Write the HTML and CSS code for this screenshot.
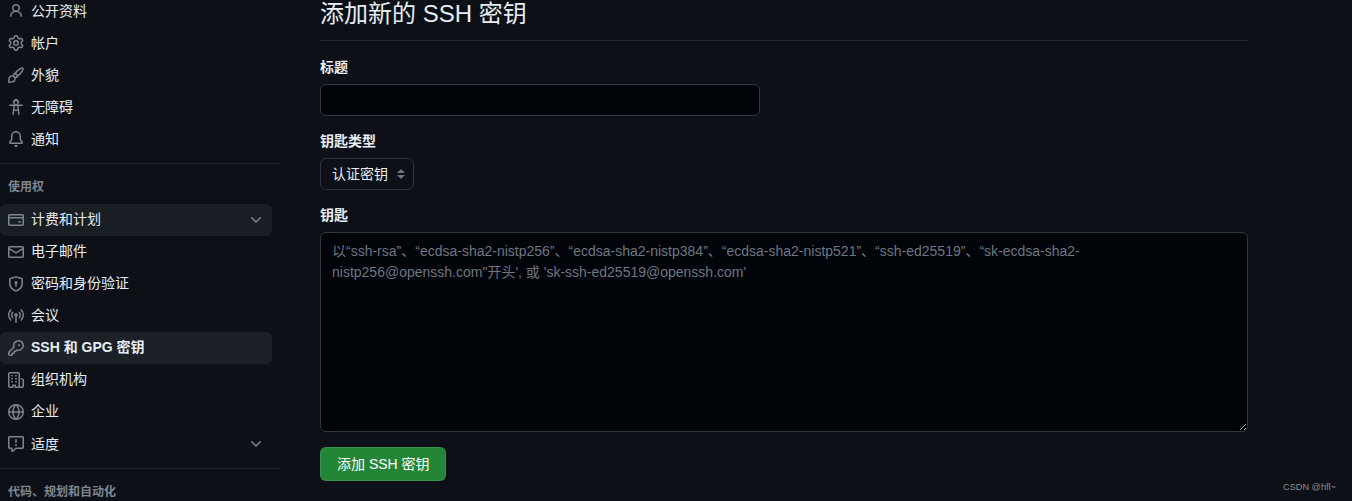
FILE: index.html
```html
<!DOCTYPE html>
<html lang="zh-CN">
<head>
<meta charset="utf-8">
<title>添加新的 SSH 密钥</title>
<link rel="stylesheet" href="styles.css">
</head>
<body>
<div class="page">
  <nav class="sidebar">
    <a class="item"><svg class="icon" viewBox="0 0 16 16"><path d="M10.561 8.073a6.005 6.005 0 0 1 3.432 5.142.75.75 0 1 1-1.498.07 4.5 4.5 0 0 0-8.99 0 .75.75 0 1 1-1.498-.07 6.004 6.004 0 0 1 3.431-5.142 3.999 3.999 0 1 1 5.123 0ZM10.5 5a2.5 2.5 0 1 0-5 0 2.5 2.5 0 0 0 5 0Z"/></svg><span>公开资料</span></a>
    <a class="item"><svg class="icon" viewBox="0 0 16 16"><path d="M8 0a8.2 8.2 0 0 1 .701.031C9.444.095 9.99.645 10.16 1.29l.288 1.107c.018.066.079.158.212.224.231.114.454.243.668.386.123.082.233.09.299.071l1.103-.303c.644-.176 1.392.021 1.82.63.27.385.506.792.704 1.218.315.675.111 1.422-.364 1.891l-.814.806c-.049.048-.098.147-.088.294.016.257.016.515 0 .772-.01.147.038.246.088.294l.814.806c.475.469.679 1.216.364 1.891a7.977 7.977 0 0 1-.704 1.217c-.428.61-1.176.807-1.82.63l-1.102-.302c-.067-.019-.177-.011-.3.071a5.909 5.909 0 0 1-.668.386c-.133.066-.194.158-.211.224l-.29 1.106c-.168.646-.715 1.196-1.458 1.26a8.006 8.006 0 0 1-1.402 0c-.743-.064-1.289-.614-1.458-1.26l-.289-1.106c-.018-.066-.079-.158-.212-.224a5.738 5.738 0 0 1-.668-.386c-.123-.082-.233-.09-.299-.071l-1.103.303c-.644.176-1.392-.021-1.82-.63a8.12 8.12 0 0 1-.704-1.218c-.315-.675-.111-1.422.363-1.891l.815-.806c.05-.048.098-.147.088-.294a6.214 6.214 0 0 1 0-.772c.01-.147-.038-.246-.088-.294l-.815-.806C.635 6.045.431 5.298.746 4.623a7.92 7.92 0 0 1 .704-1.217c.428-.61 1.176-.807 1.82-.63l1.102.302c.067.019.177.011.3-.071.214-.143.437-.272.668-.386.133-.066.194-.158.211-.224l.29-1.106C6.009.645 6.556.095 7.299.03 7.53.01 7.764 0 8 0Zm-.571 1.525c-.036.003-.108.036-.137.146l-.289 1.105c-.147.561-.549.967-.998 1.189-.173.086-.34.183-.5.29-.417.278-.97.423-1.529.27l-1.103-.303c-.109-.03-.175.016-.195.045-.22.312-.412.644-.573.99-.014.031-.021.11.059.19l.815.806c.411.406.562.957.53 1.456a4.709 4.709 0 0 0 0 .582c.032.499-.119 1.05-.53 1.456l-.815.806c-.081.08-.073.159-.059.19.162.346.353.677.573.989.02.03.085.076.195.046l1.102-.303c.56-.153 1.113-.008 1.53.27.161.107.328.204.501.29.447.222.85.629.997 1.189l.289 1.105c.029.109.101.143.137.146a6.6 6.6 0 0 0 1.142 0c.036-.003.108-.036.137-.146l.289-1.105c.147-.561.549-.967.998-1.189.173-.086.34-.183.5-.29.417-.278.97-.423 1.529-.27l1.103.303c.109.029.175-.016.195-.045.22-.313.411-.644.573-.99.014-.031.021-.11-.059-.19l-.815-.806c-.411-.406-.562-.957-.53-1.456a4.709 4.709 0 0 0 0-.582c-.032-.499.119-1.05.53-1.456l.815-.806c.081-.08.073-.159.059-.19a6.464 6.464 0 0 0-.573-.989c-.02-.03-.085-.076-.195-.046l-1.102.303c-.56.153-1.113.008-1.53-.27a4.44 4.44 0 0 0-.501-.29c-.447-.222-.85-.629-.997-1.189l-.289-1.105c-.029-.11-.101-.143-.137-.146a6.6 6.6 0 0 0-1.142 0ZM11 8a3 3 0 1 1-6 0 3 3 0 0 1 6 0ZM9.5 8a1.5 1.5 0 1 0-3.001.001A1.5 1.5 0 0 0 9.5 8Z"/></svg><span>帐户</span></a>
    <a class="item"><svg class="icon" viewBox="0 0 16 16"><path d="M11.134 1.535c.7-.509 1.416-.942 2.076-1.155.649-.21 1.463-.267 2.069.34.603.601.568 1.411.368 2.07-.202.668-.624 1.39-1.125 2.096-1.011 1.424-2.496 2.987-3.775 4.249-1.098 1.084-2.132 1.839-3.04 2.3a3.744 3.744 0 0 1-1.055 3.217c-.431.431-1.065.691-1.657.861-.614.177-1.294.287-1.914.357A21.151 21.151 0 0 1 .797 16H.743l.007-.75H.749L.742 16a.75.75 0 0 1-.743-.742l.743-.008-.742.007v-.054a21.25 21.25 0 0 1 .13-2.284c.067-.647.187-1.287.358-1.914.17-.591.43-1.226.86-1.657a3.746 3.746 0 0 1 3.227-1.054c.466-.893 1.225-1.907 2.314-2.982 1.271-1.255 2.833-2.75 4.245-3.777ZM1.62 13.089c-.051.464-.086.929-.104 1.395.466-.018.932-.053 1.396-.104a10.511 10.511 0 0 0 1.668-.309c.526-.151.856-.325 1.011-.48a2.25 2.25 0 1 0-3.182-3.182c-.155.155-.329.485-.48 1.01a10.515 10.515 0 0 0-.309 1.67Zm10.396-10.34c-1.224.89-2.605 2.189-3.822 3.384l1.718 1.718c1.21-1.205 2.51-2.597 3.387-3.833.47-.662.78-1.227.912-1.662.134-.444.032-.551.009-.575h-.001V1.78c-.014-.014-.113-.113-.548.027-.432.14-.995.462-1.655.942Zm-4.832 7.266-.001.001a9.859 9.859 0 0 0 1.63-1.142L7.155 7.216a9.7 9.7 0 0 0-1.161 1.607c.482.302.889.71 1.19 1.192Z"/></svg><span>外貌</span></a>
    <a class="item"><svg class="icon" viewBox="0 0 16 16"><path d="M9.923 5.302c.063.063.122.129.178.198H14A.75.75 0 0 1 14 7h-3.3l.578 5.163.362 2.997a.75.75 0 0 1-1.49.18L9.868 12H6.132l-.282 3.34a.75.75 0 0 1-1.49-.18l.362-2.997L5.3 7H2a.75.75 0 0 1 0-1.5h3.9a2.54 2.54 0 0 1 .176-.198 3 3 0 1 1 3.847 0ZM9.2 7.073h-2.4l-.39 3.427h3.18ZM8 5a1.5 1.5 0 1 0 0-3 1.5 1.5 0 0 0 0 3Z"/></svg><span>无障碍</span></a>
    <a class="item"><svg class="icon" viewBox="0 0 16 16"><path d="M8 16c.9 0 1.7-.6 1.9-1.5.1-.3-.1-.5-.4-.5h-3c-.3 0-.5.2-.4.5.2.9 1 1.5 1.9 1.5ZM3 5a5 5 0 0 1 10 0v2.947c0 .05.015.098.042.139l1.703 2.555A1.519 1.519 0 0 1 13.482 13H2.518a1.516 1.516 0 0 1-1.263-2.36l1.703-2.554A.255.255 0 0 0 3 7.947Zm5-3.5A3.5 3.5 0 0 0 4.5 5v2.947c0 .346-.102.683-.294.97l-1.703 2.556a.017.017 0 0 0-.003.01l.001.006c0 .002.002.004.004.006l.006.004.007.001h10.964l.007-.001.006-.004.004-.006.001-.007a.017.017 0 0 0-.003-.01l-1.703-2.554a1.745 1.745 0 0 1-.294-.97V5A3.5 3.5 0 0 0 8 1.5Z"/></svg><span>通知</span></a>
    <hr class="rule">
    <h2 class="group">使用权</h2>
    <a class="item hover"><svg class="icon" viewBox="0 0 16 16"><path d="M10.75 9a.75.75 0 0 0 0 1.5h1.5a.75.75 0 0 0 0-1.5h-1.5Z"/><path d="M0 3.75C0 2.784.784 2 1.75 2h12.5c.966 0 1.75.784 1.75 1.75v8.5A1.75 1.75 0 0 1 14.25 14H1.75A1.75 1.75 0 0 1 0 12.25ZM14.5 6.5h-13v5.75c0 .138.112.25.25.25h12.5a.25.25 0 0 0 .25-.25Zm0-2.75a.25.25 0 0 0-.25-.25H1.75a.25.25 0 0 0-.25.25V5h13Z"/></svg><span>计费和计划</span><svg class="icon chevron" viewBox="0 0 16 16"><path d="M12.78 5.22a.749.749 0 0 1 0 1.06l-4.25 4.25a.749.749 0 0 1-1.06 0L3.22 6.28a.749.749 0 1 1 1.06-1.06L8 8.939l3.72-3.719a.749.749 0 0 1 1.06 0Z"/></svg></a>
    <a class="item"><svg class="icon" viewBox="0 0 16 16"><path d="M1.75 2h12.5c.966 0 1.75.784 1.75 1.75v8.5A1.75 1.75 0 0 1 14.25 14H1.75A1.75 1.75 0 0 1 0 12.25v-8.5C0 2.784.784 2 1.75 2ZM1.5 12.251c0 .138.112.25.25.25h12.5a.25.25 0 0 0 .25-.25V5.809L8.38 9.397a.75.75 0 0 1-.76 0L1.5 5.809v6.442Zm13-8.181v-.32a.25.25 0 0 0-.25-.25H1.75a.25.25 0 0 0-.25.25v.32L8 7.88Z"/></svg><span>电子邮件</span></a>
    <a class="item"><svg class="icon" viewBox="0 0 16 16"><path d="m8.533.133 5.25 1.68A1.75 1.75 0 0 1 15 3.48V7c0 1.566-.32 3.182-1.303 4.682-.983 1.498-2.585 2.813-5.032 3.855a1.697 1.697 0 0 1-1.33 0c-2.447-1.042-4.049-2.357-5.032-3.855C1.32 10.182 1 8.566 1 7V3.48a1.75 1.75 0 0 1 1.217-1.667l5.25-1.68a1.748 1.748 0 0 1 1.066 0Zm-.61 1.429.001.001-5.25 1.68a.251.251 0 0 0-.174.237V7c0 1.36.275 2.666 1.057 3.859.784 1.194 2.121 2.342 4.366 3.298a.196.196 0 0 0 .154 0c2.245-.957 3.582-2.103 4.366-3.297C13.225 9.666 13.5 8.358 13.5 7V3.48a.25.25 0 0 0-.174-.238l-5.25-1.68a.25.25 0 0 0-.153 0ZM9.5 6.5c0 .536-.286 1.032-.75 1.3v2.45a.75.75 0 0 1-1.5 0V7.8A1.5 1.5 0 1 1 9.5 6.5Z"/></svg><span>密码和身份验证</span></a>
    <a class="item"><svg class="icon" viewBox="0 0 16 16"><path d="M8.75 8.582v5.668a.75.75 0 0 1-1.5 0V8.582a1.75 1.75 0 1 1 1.5 0Zm3.983-7.125a.75.75 0 0 1 1.06.026A7.976 7.976 0 0 1 16 7c0 2.139-.84 4.083-2.207 5.517a.75.75 0 1 1-1.086-1.034A6.474 6.474 0 0 0 14.5 7a6.474 6.474 0 0 0-1.793-4.483.75.75 0 0 1 .026-1.06Zm-9.466 0a.75.75 0 0 1 .026 1.06A6.474 6.474 0 0 0 1.5 7a6.47 6.47 0 0 0 1.793 4.483.75.75 0 0 1-1.086 1.034A7.973 7.973 0 0 1 0 7c0-2.139.84-4.083 2.207-5.517a.75.75 0 0 1 1.06-.026Zm8.556 2.321A4.988 4.988 0 0 1 13 7a4.988 4.988 0 0 1-1.177 3.222.75.75 0 1 1-1.146-.967A3.487 3.487 0 0 0 11.5 7c0-.86-.309-1.645-.823-2.255a.75.75 0 0 1 1.146-.967Zm-6.492.958A3.48 3.48 0 0 0 4.5 7a3.48 3.48 0 0 0 .823 2.255.75.75 0 0 1-1.146.967A4.981 4.981 0 0 1 3 7a4.982 4.982 0 0 1 1.188-3.236.75.75 0 1 1 1.143.972Z"/></svg><span>会议</span></a>
    <a class="item active"><svg class="icon" viewBox="0 0 16 16"><path d="M10.5 0a5.499 5.499 0 1 1-1.288 10.848l-.932.932a.749.749 0 0 1-.53.22H7v.75a.749.749 0 0 1-.22.53l-.5.5a.749.749 0 0 1-.53.22H5v.75a.749.749 0 0 1-.22.53l-.5.5a.749.749 0 0 1-.53.22h-2A1.75 1.75 0 0 1 0 14.25v-2c0-.199.079-.389.22-.53l4.932-4.932A5.5 5.5 0 0 1 10.5 0Zm-4 5.5c-.001.431.069.86.205 1.269a.75.75 0 0 1-.181.768L1.5 12.56v1.69c0 .138.112.25.25.25h1.69l.06-.06v-1.19a.75.75 0 0 1 .75-.75h1.19l.06-.06v-1.19a.75.75 0 0 1 .75-.75h1.19l1.023-1.025a.75.75 0 0 1 .768-.18A4 4 0 1 0 6.5 5.5ZM11 6a1 1 0 1 1 0-2 1 1 0 0 1 0 2Z"/></svg><span>SSH 和 GPG 密钥</span></a>
    <a class="item"><svg class="icon" viewBox="0 0 16 16"><path d="M1.75 16A1.75 1.75 0 0 1 0 14.25V1.75C0 .784.784 0 1.75 0h8.5C11.216 0 12 .784 12 1.75v12.5c0 .085-.006.168-.018.25h2.268a.25.25 0 0 0 .25-.25V8.285a.25.25 0 0 0-.111-.208l-1.055-.703a.749.749 0 1 1 .832-1.248l1.055.703c.487.325.779.871.779 1.456v5.965A1.75 1.75 0 0 1 14.25 16h-3.5a.766.766 0 0 1-.197-.026c-.099.017-.2.026-.303.026h-3a.75.75 0 0 1-.75-.75V14h-1v1.25a.75.75 0 0 1-.75.75Zm-.25-1.75c0 .138.112.25.25.25H4v-1.25a.75.75 0 0 1 .75-.75h2.5a.75.75 0 0 1 .75.75v1.25h2.25a.25.25 0 0 0 .25-.25V1.75a.25.25 0 0 0-.25-.25h-8.5a.25.25 0 0 0-.25.25ZM3.75 6h.5a.75.75 0 0 1 0 1.5h-.5a.75.75 0 0 1 0-1.5ZM3 3.75A.75.75 0 0 1 3.75 3h.5a.75.75 0 0 1 0 1.5h-.5A.75.75 0 0 1 3 3.75Zm4 3A.75.75 0 0 1 7.75 6h.5a.75.75 0 0 1 0 1.5h-.5A.75.75 0 0 1 7 6.75ZM7.75 3h.5a.75.75 0 0 1 0 1.5h-.5a.75.75 0 0 1 0-1.5ZM3 9.75A.75.75 0 0 1 3.75 9h.5a.75.75 0 0 1 0 1.5h-.5A.75.75 0 0 1 3 9.75ZM7.75 9h.5a.75.75 0 0 1 0 1.5h-.5a.75.75 0 0 1 0-1.5Z"/></svg><span>组织机构</span></a>
    <a class="item"><svg class="icon" viewBox="0 0 16 16"><path d="M8 0a8 8 0 1 1 0 16A8 8 0 0 1 8 0ZM5.78 8.75a9.64 9.64 0 0 0 1.363 4.177c.255.426.542.832.857 1.215.245-.296.551-.705.857-1.215A9.64 9.64 0 0 0 10.22 8.75Zm4.44-1.5a9.64 9.64 0 0 0-1.363-4.177c-.307-.51-.612-.919-.857-1.215a9.927 9.927 0 0 0-.857 1.215A9.64 9.64 0 0 0 5.78 7.25Zm-5.944 1.5H1.543a6.507 6.507 0 0 0 4.666 5.5c-.123-.181-.24-.365-.352-.552-.715-1.192-1.437-2.874-1.581-4.948Zm-2.733-1.5h2.733c.144-2.074.866-3.756 1.58-4.948.12-.197.237-.381.353-.552a6.507 6.507 0 0 0-4.666 5.5Zm10.181 1.5c-.144 2.074-.866 3.756-1.58 4.948-.12.197-.237.381-.353.552a6.507 6.507 0 0 0 4.666-5.5Zm2.733-1.5a6.507 6.507 0 0 0-4.666-5.5c.123.181.24.365.353.552.714 1.192 1.436 2.874 1.58 4.948Z"/></svg><span>企业</span></a>
    <a class="item last"><svg class="icon" viewBox="0 0 16 16"><path d="M0 1.75C0 .784.784 0 1.75 0h12.5C15.216 0 16 .784 16 1.75v9.5A1.75 1.75 0 0 1 14.25 13H8.06l-2.573 2.573A1.458 1.458 0 0 1 3 14.543V13H1.75A1.75 1.75 0 0 1 0 11.25Zm1.75-.25a.25.25 0 0 0-.25.25v9.5c0 .138.112.25.25.25h2a.75.75 0 0 1 .75.75v2.19l2.72-2.72a.749.749 0 0 1 .53-.22h6.5a.25.25 0 0 0 .25-.25v-9.5a.25.25 0 0 0-.25-.25Zm7 2.25v2.5a.75.75 0 0 1-1.5 0v-2.5a.75.75 0 0 1 1.5 0ZM9 9a1 1 0 1 1-2 0 1 1 0 0 1 2 0Z"/></svg><span>适度</span><svg class="icon chevron" viewBox="0 0 16 16"><path d="M12.78 5.22a.749.749 0 0 1 0 1.06l-4.25 4.25a.749.749 0 0 1-1.06 0L3.22 6.28a.749.749 0 1 1 1.06-1.06L8 8.939l3.72-3.719a.749.749 0 0 1 1.06 0Z"/></svg></a>
    <hr class="rule">
    <h2 class="group">代码、规划和自动化</h2>
  </nav>
  <main class="main">
    <h1 class="title">添加新的 SSH 密钥</h1>
    <form class="form">
      <div class="field">
        <label class="label" for="key-title">标题</label>
        <input class="input" id="key-title" type="text">
      </div>
      <div class="field">
        <label class="label" for="key-type">钥匙类型</label>
        <select class="select" id="key-type"><option>认证密钥</option></select>
      </div>
      <div class="field">
        <label class="label" for="key-body">钥匙</label>
        <textarea class="textarea" id="key-body" placeholder="以“ssh-rsa”、“ecdsa-sha2-nistp256”、“ecdsa-sha2-nistp384”、“ecdsa-sha2-nistp521”、“ssh-ed25519”、“sk-ecdsa-sha2-nistp256@openssh.com&quot;开头', 或 'sk-ssh-ed25519@openssh.com'"></textarea>
      </div>
      <button class="button" type="button">添加 SSH 密钥</button>
    </form>
  </main>
</div>
<div class="watermark">CSDN @hfl~</div>
</body>
</html>
```
FILE: styles.css
```css
* { box-sizing: border-box; }

html, body {
  margin: 0;
  height: 501px;
  overflow: hidden;
  background: #0d1117;
}

body {
  position: relative;
  color: #e6edf3;
  font-family: "Liberation Sans", "Noto Sans CJK SC", sans-serif;
  font-size: 14px;
  line-height: 21px;
}

.page {
  display: flex;
  margin-top: -5px;
}

.sidebar {
  flex: 0 0 280px;
  display: flex;
  flex-direction: column;
}

.item {
  display: flex;
  align-items: center;
  gap: 7px;
  width: 272px;
  height: 32px;
  flex: none;
  padding: 0 8px;
  border-radius: 6px;
}

.item.hover { background: #191e25; }
.item.active { background: #1b2127; font-weight: 700; }
.item.last { margin-top: 0.5px; }

.icon {
  width: 16px;
  height: 16px;
  flex: none;
  fill: #7d8590;
  fill-rule: evenodd;
}

.chevron { margin-left: auto; }

.rule {
  width: 280px;
  height: 1px;
  margin: 8px 0 0;
  border: 0;
  background: #21262d;
  flex: none;
}

.group {
  margin: 14px 0 7.6px;
  padding-left: 8px;
  font-size: 12px;
  line-height: 18px;
  font-weight: 700;
  color: #7d8590;
}

.main {
  width: 928px;
  margin-left: 40px;
  padding-top: 1px;
  flex: none;
}

.title {
  margin: 0 0 16px;
  padding-bottom: 8px;
  border-bottom: 1px solid #21262d;
  font-size: 24px;
  line-height: 36px;
  font-weight: 400;
}

.field { margin-bottom: 15px; }

.label {
  display: block;
  margin-bottom: 6px;
  font-weight: 700;
}

.input, .select, .textarea {
  display: block;
  border: 1px solid #30363d;
  border-radius: 6px;
  font: inherit;
  color: #e6edf3;
}

.input {
  width: 440px;
  height: 32px;
  background: #010409;
}

.select {
  width: 94px;
  height: 32px;
  padding: 0 24px 0 11px;
  appearance: none;
  background: #0d1117 url("data:image/svg+xml,%3Csvg xmlns='http://www.w3.org/2000/svg' width='16' height='16' viewBox='0 0 16 16'%3E%3Cpath fill='%236e7681' d='M4.427 9.427l3.396 3.396a.25.25 0 0 0 .354 0l3.396-3.396A.25.25 0 0 0 11.396 9H4.604a.25.25 0 0 0-.177.427zM4.427 6.573l3.396-3.396a.25.25 0 0 1 .354 0l3.396 3.396A.25.25 0 0 1 11.396 7H4.604a.25.25 0 0 1-.177-.427z'/%3E%3C/svg%3E") no-repeat right 4px center;
}

.textarea {
  width: 928px;
  height: 200px;
  padding: 8px 12px 8px 11px;
  background: #010409;
  resize: vertical;
  line-height: 21px;
}

.textarea::placeholder { color: #6e7681; opacity: 1; }

.button {
  display: block;
  width: 126px;
  height: 34px;
  padding: 0 0 0 16px;
  border: 1px solid rgba(240, 246, 252, 0.1);
  border-radius: 6px;
  background: #238636;
  color: #fff;
  font: inherit;
  text-align: left;
  white-space: nowrap;
}

.watermark {
  position: absolute;
  left: 1283px;
  top: 481px;
  font-size: 9.2px;
  line-height: 12px;
  color: #8b8b8b;
}
```
